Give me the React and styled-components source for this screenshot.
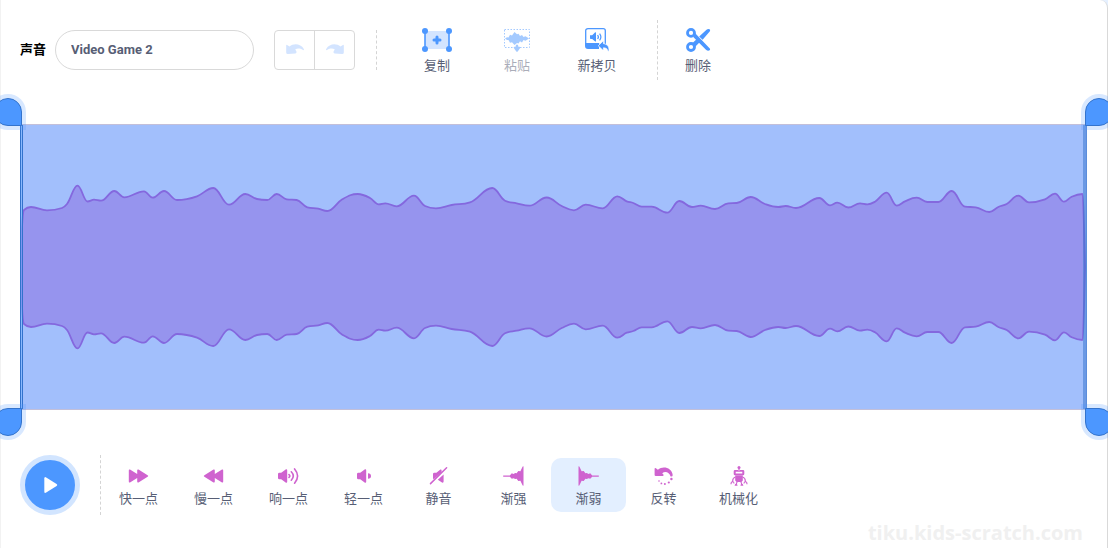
import React from "react";
import styled, { createGlobalStyle, css } from "styled-components";

const GlobalStyle = createGlobalStyle`
  *, *::before, *::after { box-sizing: border-box; }
  body {
    margin: 0;
    background: #e5f0ff;
    font-family: Roboto, "Noto Sans CJK SC", sans-serif;
    font-size: 13px;
    line-height: 20px;
    color: #575e75;
  }
  button, input { font: inherit; color: inherit; }
`;

const Viewport = styled.div`
  overflow: hidden;
`;

const Editor = styled.main`
  position: relative;
  display: flex;
  flex-direction: column;
  min-height: 100vh;
  padding: 20px 20px 32px 19px;
  border: solid #d9d9d9;
  border-width: 0 1px 0 0;
  border-left: 1px solid #f2f2f2;
  border-top-right-radius: 8px;
  background: #fff;
`;

const Toolbar = styled.div`
  display: flex;
  align-items: center;
  height: 60px;
`;

const NameLabel = styled.label`
  display: flex;
  align-items: center;
  gap: 9px;
  color: #000;
  font-weight: 700;
  white-space: nowrap;
`;

const NameInput = styled.input`
  width: 199px;
  height: 40px;
  padding: 0 16px 2px 15px;
  border: 1px solid #d9d9d9;
  border-radius: 20px;
  background: #fff;
  color: #575e75;
  font-weight: 700;
  outline: none;
`;

const HistoryGroup = styled.div`
  display: flex;
  height: 40px;
  margin: 0 21px 0 20px;
  border: 1px solid #d9d9d9;
  border-radius: 4px;
`;

const HistoryButton = styled.button`
  display: grid;
  place-items: center;
  width: 39px;
  padding: 0;
  border: 0;
  background: none;
  & + & {
    width: 40px;
    border-left: 1px solid #d9d9d9;
  }
`;

const Divider = styled.span`
  width: 1px;
  height: ${(p) => p.$height}px;
  border-left: 1px dashed #d4d4d4;
`;

const ToolGroup = styled.div`
  display: flex;
  padding: 0 20px;
`;

const ToolButton = styled.button`
  display: flex;
  flex-direction: column;
  align-items: center;
  gap: 4px;
  width: 80px;
  padding: 4px 0 0;
  border: 0;
  background: none;
  white-space: nowrap;
  opacity: ${(p) => (p.disabled ? 0.5 : 1)};
  svg { display: block; }
`;

const WaveArea = styled.section`
  position: relative;
  height: 286px;
  margin: 44px 0 45px;
  border: solid #c3bfd9;
  border-width: 1px 0;
  background: #a2bffc;
`;

const WaveSvg = styled.svg`
  display: block;
  width: 100%;
  height: 100%;
`;

const TrimEdge = styled.div`
  position: absolute;
  top: 0;
  bottom: 0;
  ${(p) =>
    p.$side === "left"
      ? css`
          left: 0;
          width: 3px;
          border: solid #3373cc;
          border-width: 0 1px;
          background: rgba(120, 180, 255, 0.6);
        `
      : css`
          right: 0;
          width: 4px;
          border-right: 1px solid #5c8ddb;
          background: rgba(51, 115, 204, 0.5);
        `}
`;

const corners = {
  "left-top": "14px 14px 0 14px",
  "left-bottom": "14px 0 14px 14px",
  "right-top": "14px 14px 14px 0",
  "right-bottom": "0 14px 14px 14px",
};

const TrimHandle = styled.span`
  position: absolute;
  width: 28px;
  height: 28px;
  ${(p) => p.$side}: -27px;
  ${(p) => p.$end}: -27px;
  border: 1px solid #3373cc;
  border-radius: ${(p) => corners[`${p.$side}-${p.$end}`]};
  background: #4c97ff;
  box-shadow: 0 0 0 4px rgba(76, 151, 255, 0.22);
`;

const EffectsBar = styled.div`
  display: flex;
  align-items: center;
  height: 60px;
`;

const PlayButton = styled.button`
  display: grid;
  place-items: center;
  flex: none;
  width: 60px;
  height: 60px;
  margin-right: 20px;
  padding: 0;
  border: 5px solid #d2e5ff;
  border-radius: 50%;
  background: #4c97ff;
`;

const EffectButton = styled.button`
  display: flex;
  flex-direction: column;
  align-items: center;
  gap: 3px;
  width: 75px;
  height: 54px;
  padding: 8px 0 0;
  border: 0;
  border-radius: 10px;
  background: ${(p) => (p.$active ? "#e3efff" : "none")};
  white-space: nowrap;
  svg { display: block; }
`;

const Watermark = styled.span`
  position: absolute;
  right: 24px;
  bottom: 1px;
  color: #f0f0f0;
  font: 700 20px/28px "Open Sans", sans-serif;
`;

/* Horizontal position and half height of each turning point of the outline. */
const WAVE = [
  [1, 0], [2, 40], [4, 57], [11, 60], [27, 56.6], [42, 59], [47, 63], [57.5, 81.4], [67.5, 65.5], [74, 67.3], [81, 66.3],
  [94.3, 76], [104.3, 69.7], [124, 75.7], [132.7, 69.3], [144, 76], [157, 67], [177, 70.7], [193.3, 79],
  [209, 62.3], [225.3, 73], [237, 68], [247.3, 67], [256.7, 73], [266.7, 67.7], [276.7, 67], [287.3, 59.7],
  [298.3, 58.3], [307.3, 56], [322.3, 67.7], [337.7, 73], [350, 69], [358.7, 62.7], [365.3, 63.7],
  [376.7, 60.7], [394, 71.3], [405, 61], [416, 58.7], [431.7, 62], [450, 64.7], [472.3, 79], [485, 66.3],
  [496.7, 63.7], [509.3, 61.3], [526.7, 69.5], [541.7, 61], [554, 56.7], [565.7, 62.3], [582.7, 58.7],
  [597.3, 70.7], [606.7, 65.7], [613.3, 64], [621.7, 60.3], [631.7, 60.3], [647.3, 54.3], [659.3, 66],
  [672, 60], [680.7, 61.3], [695, 58], [708.3, 63.7], [716.7, 64], [730.7, 70], [745, 63], [758.3, 60],
  [765.7, 61], [776, 59], [799.3, 69], [810, 61.7], [817.3, 64.3], [828.3, 59.5], [840, 63.7],
  [847.3, 62.7], [855, 65.3], [866.7, 74.3], [876.7, 61.3], [885, 65.7], [896.7, 69.3], [907.3, 65],
  [918.3, 65], [931.7, 76], [945, 60.3], [955.7, 59.7], [969.3, 55], [978.3, 60], [986.7, 63], [998.3, 71.3],
  [1009, 64.7], [1025, 67.7], [1035, 73.3], [1044, 65.3], [1051.7, 70.3], [1062.5, 73], [1064, 40], [1065, 0],
];

const MIDDLE = 142;

/* Cubic segments that are level at each peak, so that none overshoots its value. */
function smooth(points) {
  const n = points.length;
  const slopes = [];
  for (let i = 0; i < n - 1; i++) {
    slopes.push((points[i + 1][1] - points[i][1]) / (points[i + 1][0] - points[i][0]));
  }
  const tangents = points.map((_, i) => {
    if (i === 0) return slopes[0];
    if (i === n - 1) return slopes[n - 2];
    const a = slopes[i - 1];
    const b = slopes[i];
    if (a * b <= 0) return 0;
    return Math.sign(a) * Math.min(Math.abs(a + b) / 2, 2.2 * Math.abs(a), 2.2 * Math.abs(b));
  });
  const segments = [];
  for (let i = 0; i < n - 1; i++) {
    const [x0, y0] = points[i];
    const [x1, y1] = points[i + 1];
    const h = (x1 - x0) * 0.4;
    segments.push([x0 + h, y0 + tangents[i] * h, x1 - h, y1 - tangents[i + 1] * h, x1, y1]);
  }
  return segments;
}

function outline(sign) {
  return smooth(WAVE)
    .map((s) => "C" + s.map((v, i) => (i % 2 ? MIDDLE + sign * v : v).toFixed(2)).join(" "))
    .join("");
}

const WAVE_PATH = `M1 ${MIDDLE}${outline(-1)}M1 ${MIDDLE}${outline(1)}`;
const WAVE_FILL = [-1, 1].map((s) => `M1 ${MIDDLE}${outline(s)}Z`).join("");

function Waveform() {
  return (
    <WaveSvg viewBox="0 0 1067 284" preserveAspectRatio="none" aria-hidden="true">
      <path d={WAVE_FILL} fill="#9694ee" />
      <path d={WAVE_PATH} fill="none" stroke="#8468de" strokeWidth="1.8" vectorEffect="non-scaling-stroke" />
    </WaveSvg>
  );
}

function Icon({ size = 20, width = size, children, color = "#cf63cf" }) {
  return (
    <svg width={width} height={size} viewBox={`0 0 ${width} ${size}`} fill={color} aria-hidden="true">
      {children}
    </svg>
  );
}

const undoPath =
  "M1.2 5.2Q1.2 4.4 2.1 4.9L4.5 6.4C9 3 15.8 3.8 18.8 9Q19.4 10.6 18 10C14.8 8.2 12.2 8.2 10.2 9.6L11.4 11.2Q12 13.2 10.4 13.6L2.8 14Q1.2 14 1.2 12.4Z";

const UndoIcon = () => (
  <Icon color="#d3e4ff"><path d={undoPath} /></Icon>
);
const RedoIcon = () => (
  <Icon color="#d3e4ff"><path d={undoPath} transform="matrix(-1 0 0 1 20 0)" /></Icon>
);

const CopyIcon = () => (
  <Icon size={24} width={30} color="#4c97ff">
    <path d="M3 3H27V21H3Z" fill="#d3e4ff" />
    <path d="M2.2 3H3.8V21H2.2ZM26.2 3H27.8V21H26.2Z" />
    <circle cx="3" cy="3" r="3" /><circle cx="27" cy="3" r="3" />
    <circle cx="3" cy="21" r="3" /><circle cx="27" cy="21" r="3" />
    <path d="M15 7.5Q16.5 7.5 16.5 9V10.5H18Q19.5 10.5 19.5 12T18 13.5H16.5V15Q16.5 16.5 15 16.5T13.5 15V13.5H12Q10.5 13.5 10.5 12T12 10.5H13.5V9Q13.5 7.5 15 7.5Z" />
  </Icon>
);

const PasteIcon = () => (
  <Icon size={24} width={26} color="#4c97ff">
    <path d="M.5 1.5H25.5V19.5H.5Z" fill="none" stroke="#4c97ff" strokeDasharray="1.5 1.5" />
    <path d="M1 10.5L3 9.2 4.5 9.5 6 6.8 8 7.4 10.5 4 13 6.2 14.5 5.8 16 8 18 7 19.5 9 21.5 8.3 25 10.5 21.5 12.8 19.5 12 18 14.5 16 13.2 14.5 15.4 13 15 10.5 17 8 14.3 6 14.8 4.5 12 3 12Z" />
    <path d="M13 16.5Q14.3 16.5 14.3 18V18.8H15.5Q16.8 19.3 16 20.3L13.7 23.4Q13 24.2 12.3 23.4L10 20.3Q9.2 19.3 10.5 18.8H11.7V18Q11.7 16.5 13 16.5Z" />
  </Icon>
);

const CopyNewIcon = () => (
  <Icon size={24} width={24} color="#4c97ff">
    <path d="M3 .7H18.2Q20.3.7 20.3 2.8V17.2H.7V2.8Q.7.7 3 .7Z" fill="#fff" stroke="#4c97ff" strokeWidth="1.3" />
    <path d="M0 15H14.2L14 21H3Q0 21 0 18ZM5 7.2H7.2L10.2 4.3Q11 4 11 5V13Q11 13.9 10.2 13.4L7.2 11H5.6Q5 11 5 10Z" />
    <path d="M12.6 7Q14.2 9 12.6 11M14.6 5.6Q17.2 9 14.6 12.3" fill="none" stroke="#4c97ff" strokeWidth="1.2" />
    <path d="M13.2 17.8L17.7 13.4Q18.4 13 18.4 14V15.6C22.4 16.2 24.2 18.6 24 22.4Q23.7 24 22.8 22.4C21.8 20.4 20.5 19.8 18.4 19.8V21.4Q18.3 22.4 17.5 21.8Z" stroke="#fff" strokeWidth=".7" />
  </Icon>
);

const DeleteIcon = () => (
  <Icon size={24} width={26} color="#4c97ff">
    <circle cx="6" cy="4.9" r="3.5" fill="none" stroke="#4c97ff" strokeWidth="2.8" />
    <circle cx="6" cy="19" r="3.5" fill="none" stroke="#4c97ff" strokeWidth="2.8" />
    <path d="M8 6.4L10 5 25 20.7Q25.6 22.2 24 22.6 22.4 23 21 21.7L8.5 9.2Z" />
    <path d="M14.2 8.4L21.5 1.7Q23 .7 24.6 1.3 25.6 2 24.9 3.2L17.6 11.7ZM7.8 14.7L11.3 11.4 14.4 14.6 10.2 18.7Z" />
  </Icon>
);

const fastPath = "M.8 4.4Q.8 3 2 3.6L9.2 8V4.4Q9.2 3 10.5 3.6L19.6 9.2Q21 10 19.6 10.8L10.5 16.4Q9.2 17 9.2 15.6V12L2 16.4Q.8 17 .8 15.6Z";
const FasterIcon = () => <Icon width={21}><path d={fastPath} /></Icon>;
const SlowerIcon = () => <Icon width={21}><path d={fastPath} transform="matrix(-1 0 0 1 21 0)" /></Icon>;

const speakerPath = "M0 8Q0 6.7 1.4 6.7H3.2L8 3.3Q9.2 3 9.2 4.3V15.7Q9.2 17 8 16.7L3.2 13.3H1.4Q0 13.3 0 12Z";
const LouderIcon = () => (
  <Icon width={21}>
    <path d={speakerPath} />
    <path d="M11 8.6Q12.7 10 11 11.4M13.3 5.8Q17.3 10 13.3 14.2M16.6 2.9Q22.6 10 16.6 17.2" fill="none" stroke="#cf63cf" strokeWidth="1.6" strokeLinecap="round" />
  </Icon>
);
const SofterIcon = () => (
  <Icon>
    <path d={speakerPath} transform="translate(3)" />
    <path d="M14 7.2Q17 7.4 17 10T14 12.8Z" />
  </Icon>
);
const MuteIcon = () => (
  <Icon>
    <path d="M4 8Q4 6.8 5.4 6.8H7.4L11.4 3.6Q12.6 3.2 12.6 4.4V6.2L4.8 13.2Q4 13 4 12ZM8.8 13.7L14.6 8.4V15.4Q14.4 17 13 16.6Z" />
    <path d="M1.5 17.6L17.6 1.8" stroke="#cf63cf" strokeWidth="1.5" strokeLinecap="round" />
  </Icon>
);
const fadePath = "M20.5.4V19.6Q19.8 20 19.3 18.8L17.4 14.7 15.3 15.1 13.6 12.7 12.2 13.1 10.5 12.2 8.8 12.7 6.8 10.7H.2V9.6H6.8L8.8 7.3 10.5 8 12.2 7 13.6 7.3 15.3 5 17.4 5.3 19.3 1.2Q19.8 0 20.5.4Z";
const FadeInIcon = () => <Icon width={21}><path d={fadePath} /></Icon>;
const FadeOutIcon = () => <Icon width={21}><path d={fadePath} transform="matrix(-1 0 0 1 21 0)" /></Icon>;
const ReverseIcon = () => (
  <Icon>
    <path d="M.6 2.8Q.7 1.5 1.9 2.2L3.9 3.8C9-.6 17.9 1.8 18.7 9Q18.7 11 16.6 10.5C15.3 6.2 11.4 4.9 8.2 7.2L9.4 8.6Q10 9.8 8.6 10L1.8 10Q.6 10 .6 9Z" />
    <circle cx="17.4" cy="13" r="1.2" /><circle cx="14.8" cy="16.5" r="1.1" />
    <circle cx="10.9" cy="18" r="1" /><circle cx="7.4" cy="17.4" r=".9" /><circle cx="5" cy="15" r=".8" />
  </Icon>
);
const RobotIcon = () => (
  <Icon>
    <circle cx="10" cy="1.5" r="1.5" />
    <path d="M9.4 2H10.6V4.5H9.4ZM6 4H14Q15.3 4 15.3 5.3V8Q15.3 9.3 14 9.3H6Q4.7 9.3 4.7 8V5.3Q4.7 4 6 4ZM6.7 5.8V7.6H13.3V5.8ZM6.2 9H13.8V14.4Q13 16 11.4 16H8.6Q7 16 6.2 14.4Z" fillRule="evenodd" />
    <path d="M6.4 11Q3.6 11.8 3.6 15.4M13.6 11Q16.4 11.8 16.4 15.4M8.2 15.5L7.2 18.4M11.8 15.5L12.8 18.4M2 18.2Q2 15.8 3.5 15.8T5 17.6M18 18.2Q18 15.8 16.5 15.8T15 17.6" fill="none" stroke="#cf63cf" strokeWidth="1.1" />
    <path d="M5.6 19.8Q5.8 17.8 7.1 17.8T8.6 19.8ZM11.4 19.8Q11.6 17.8 12.9 17.8T14.4 19.8Z" />
  </Icon>
);

const tools = [
  { label: "复制", Glyph: CopyIcon },
  { label: "粘贴", Glyph: PasteIcon, disabled: true },
  { label: "新拷贝", Glyph: CopyNewIcon },
];

const effects = [
  { label: "快一点", Glyph: FasterIcon },
  { label: "慢一点", Glyph: SlowerIcon },
  { label: "响一点", Glyph: LouderIcon },
  { label: "轻一点", Glyph: SofterIcon },
  { label: "静音", Glyph: MuteIcon },
  { label: "渐强", Glyph: FadeInIcon },
  { label: "渐弱", Glyph: FadeOutIcon, active: true },
  { label: "反转", Glyph: ReverseIcon },
  { label: "机械化", Glyph: RobotIcon },
];

export default function App() {
  return (
    <Viewport>
      <GlobalStyle />
      <Editor>
        <Toolbar>
          <NameLabel>
            声音
            <NameInput type="text" defaultValue="Video Game 2" />
          </NameLabel>
          <HistoryGroup>
            <HistoryButton type="button" disabled aria-label="撤销"><UndoIcon /></HistoryButton>
            <HistoryButton type="button" disabled aria-label="重做"><RedoIcon /></HistoryButton>
          </HistoryGroup>
          <Divider $height={40} />
          <ToolGroup>
            {tools.map(({ label, Glyph, disabled }) => (
              <ToolButton key={label} type="button" disabled={disabled}>
                <Glyph />
                {label}
              </ToolButton>
            ))}
          </ToolGroup>
          <Divider $height={60} />
          <ToolButton type="button">
            <DeleteIcon />
            删除
          </ToolButton>
        </Toolbar>

        <WaveArea>
          <Waveform />
          <TrimEdge $side="left">
            <TrimHandle $side="left" $end="top" />
            <TrimHandle $side="left" $end="bottom" />
          </TrimEdge>
          <TrimEdge $side="right">
            <TrimHandle $side="right" $end="top" />
            <TrimHandle $side="right" $end="bottom" />
          </TrimEdge>
        </WaveArea>

        <EffectsBar>
          <PlayButton type="button" aria-label="播放">
            <Icon color="#fff">
              <path d="M4.3 3.6Q4.3 1.4 6.2 2.4L16.6 8.9Q18 10 16.6 11.1L6.2 17.6Q4.3 18.6 4.3 16.4Z" />
            </Icon>
          </PlayButton>
          <Divider $height={60} />
          {effects.map(({ label, Glyph, active }) => (
            <EffectButton key={label} type="button" $active={active}>
              <Glyph />
              {label}
            </EffectButton>
          ))}
        </EffectsBar>
        <Watermark>tiku.kids-scratch.com</Watermark>
      </Editor>
    </Viewport>
  );
}
